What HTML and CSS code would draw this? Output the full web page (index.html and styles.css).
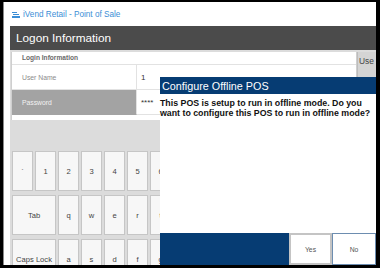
FILE: index.html
```html
<!DOCTYPE html>
<html lang="en">
<head>
    <meta charset="UTF-8" />
    <title>iVend Retail - Point of Sale</title>
    <link rel="stylesheet" href="styles.css">
</head>
<body>
    <div class="frame">
        <div class="app-title">
            <svg class="app-icon" width="8" height="6" viewBox="0 0 8 6">
                <rect x="0" y="0" width="5" height="1" fill="#3b8ed6"/>
                <rect x="1" y="2" width="6" height="1" fill="#3b8ed6"/>
                <rect x="0" y="4" width="8" height="2" fill="#3b8ed6"/>
            </svg>
            <span>iVend Retail - Point of Sale</span>
        </div>

        <div class="main">
            <div class="header">Logon Information</div>

            <div class="content">
                <div class="form-col">
                    <div class="form">
                        <div class="form-caption">Login Information</div>
                        <div class="form-row">
                            <div class="form-label">User Name</div>
                            <div class="form-value">1</div>
                        </div>
                        <div class="form-row active">
                            <div class="form-label">Password</div>
                            <div class="form-value">****</div>
                        </div>
                    </div>

                    <div class="keyboard">
                        <div class="key-row">
                            <div class="key">`</div>
                            <div class="key">1</div>
                            <div class="key">2</div>
                            <div class="key">3</div>
                            <div class="key">4</div>
                            <div class="key">5</div>
                            <div class="key">6</div>
                            <div class="key">7</div>
                        </div>
                        <div class="key-row">
                            <div class="key wide">Tab</div>
                            <div class="key">q</div>
                            <div class="key">w</div>
                            <div class="key">e</div>
                            <div class="key">r</div>
                            <div class="key">t</div>
                            <div class="key">y</div>
                        </div>
                        <div class="key-row">
                            <div class="key wide">Caps Lock</div>
                            <div class="key">a</div>
                            <div class="key">s</div>
                            <div class="key">d</div>
                            <div class="key">f</div>
                            <div class="key">g</div>
                            <div class="key">h</div>
                        </div>
                    </div>
                </div>

                <div class="side-col">Use</div>
            </div>
        </div>

        <!-- Dialogo encima del formulario -->
        <div class="dialog">
            <div class="dialog-title">Configure Offline POS</div>
            <div class="dialog-body">This POS is setup to run in offline mode. Do you want to configure this POS to run in offline mode?</div>
            <div class="dialog-footer">
                <div class="dialog-space"></div>
                <div class="btn btn-yes">Yes</div>
                <div class="btn btn-no">No</div>
            </div>
        </div>
    </div>
</body>
</html>
```

FILE: styles.css
```css
body {
    margin: 0;
    padding: 0;
    background-color: #000;
    font-family: 'Liberation Sans', Arial, sans-serif;
    width: 380px;
    height: 268px;
    overflow: hidden;
}

.frame {
    position: relative;
    margin: 2px 4px 3px 3px;
    width: 373px;
    height: 263px;
    background: #fff;
    box-shadow: inset 1px 0 0 #8a8a8a;
    display: flex;
    flex-direction: column;
    overflow: hidden;
}

/* BARRA DE TITULO */
.app-title {
    height: 24px;
    display: flex;
    align-items: center;
    padding-left: 9px;
    color: #3b8ed6;
    font-size: 8.2px;
    flex-shrink: 0;
}

.app-icon {
    margin-right: 3px;
    margin-top: 1px;
}

.main {
    flex: 1;
    margin-left: 7px;
    display: flex;
    flex-direction: column;
    min-height: 0;
}

.header {
    height: 24px;
    background: #4b4b4b;
    color: #fff;
    font-size: 11.8px;
    display: flex;
    align-items: center;
    padding-left: 6px;
    flex-shrink: 0;
}

.content {
    flex: 1;
    display: flex;
    background: #dcdcdc;
    padding: 2px 0 0 1px;
    min-height: 0;
}

.form-col {
    width: 347px;
    display: flex;
    flex-direction: column;
}

/* FORMULARIO */
.form {
    background: #fff;
    border-left: 1px solid #cfcfcf;
    border-right: 1px solid #cfcfcf;
    padding-bottom: 5px;
}

.form-caption {
    height: 12px;
    line-height: 12px;
    padding-left: 10px;
    font-size: 6.6px;
    font-weight: bold;
    color: #6a6a6a;
    border-bottom: 1px solid #e2e2e2;
}

.form-row {
    display: flex;
    height: 25px;
}

.form-label {
    width: 114px;
    padding-left: 10px;
    display: flex;
    align-items: center;
    font-size: 6.8px;
    color: #8c8c8c;
    border-right: 1px solid #e2e2e2;
    border-bottom: 1px solid #e2e2e2;
}

.form-value {
    flex: 1;
    display: flex;
    align-items: center;
    padding-left: 4px;
    font-size: 8px;
    color: #333;
    border-bottom: 1px solid #e2e2e2;
}

.form-row.active .form-label {
    background: #a3a3a3;
    color: #f2f2f2;
    border-bottom-color: #a3a3a3;
}

/* TECLADO */
.keyboard {
    flex: 1;
    background: #dcdcdc;
    padding: 31px 0 0 1px;
    display: flex;
    flex-direction: column;
    gap: 4px;
}

.key-row {
    display: flex;
    gap: 2px;
    height: 40px;
    flex-shrink: 0;
}

.key {
    width: 19px;
    background: #f7f7f7;
    border: 1px solid #c6c6c6;
    display: flex;
    align-items: center;
    justify-content: center;
    font-size: 7.6px;
    color: #444;
    flex-shrink: 0;
}

.key.wide {
    width: 42px;
}

.side-col {
    width: 17px;
    background: #d4d4d4;
    border-left: 1px solid #bdbdbd;
    font-size: 8.4px;
    color: #444;
    padding-top: 4px;
    padding-left: 1px;
    white-space: nowrap;
}

/* DIALOGO */
.dialog {
    position: absolute;
    left: 157px;
    top: 75px;
    width: 216px;
    height: 188px;
    background: #fff;
    display: flex;
    flex-direction: column;
}

.dialog-title {
    height: 16px;
    background: #063c73;
    color: #fff;
    font-size: 10.8px;
    display: flex;
    align-items: center;
    padding-left: 2px;
    padding-top: 1px;
}

.dialog-body {
    flex: 1;
    padding: 4px 4px 0 0;
    font-size: 8.8px;
    line-height: 10px;
    font-weight: bold;
    color: #111;
}

.dialog-footer {
    height: 32px;
    display: flex;
}

.dialog-space {
    flex: 1;
    background: #063c73;
}

.btn {
    background: #fff;
    display: flex;
    align-items: center;
    justify-content: center;
    font-size: 6.8px;
    color: #555;
    box-sizing: border-box;
}

.btn-yes {
    width: 43px;
    border: 2px solid #c4c4c4;
}

.btn-no {
    width: 44px;
    border: 1px solid #6d8db0;
}
```
